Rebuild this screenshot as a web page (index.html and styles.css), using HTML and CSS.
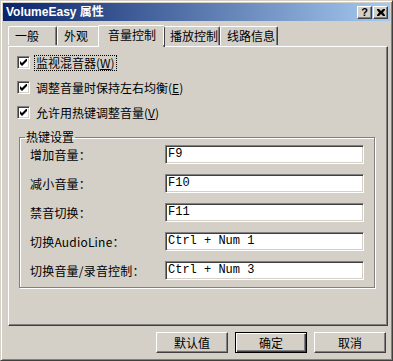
FILE: index.html
```html
<!DOCTYPE html>
<html lang="zh-CN">
<head>
    <meta charset="UTF-8">
    <title>VolumeEasy 属性</title>
    <link rel="stylesheet" href="styles.css">
</head>
<body>
    <div class="window">
        <div class="titlebar">
            <span class="title">VolumeEasy 属性</span>
            <div class="title-buttons">
                <span class="cap-btn">?</span>
                <span class="cap-btn">
                    <svg width="8" height="7" viewBox="0 0 8 7"><path d="M0 0h2l2 2 2-2h2v1l-2 2.5 2 2.5v1h-2l-2-2-2 2h-2v-1l2-2.5-2-2.5z" fill="#000"/></svg>
                </span>
            </div>
        </div>

        <!-- Tabs -->
        <div class="tabs">
            <div class="tab t1">一般</div>
            <div class="tab t2">外观</div>
            <div class="tab t3 active">音量控制</div>
            <div class="tab t4">播放控制</div>
            <div class="tab t5">线路信息</div>
        </div>

        <div class="panel">
            <label class="check">
                <span class="box"><svg width="7" height="7" viewBox="0 0 7 7"><path d="M0 2v3l2 2 5-5v-3l-5 5z" fill="#000"/></svg></span>
                <span class="check-text focus">监视混音器(<u>W</u>)</span>
            </label>
            <label class="check">
                <span class="box"><svg width="7" height="7" viewBox="0 0 7 7"><path d="M0 2v3l2 2 5-5v-3l-5 5z" fill="#000"/></svg></span>
                <span class="check-text">调整音量时保持左右均衡(<u>E</u>)</span>
            </label>
            <label class="check">
                <span class="box"><svg width="7" height="7" viewBox="0 0 7 7"><path d="M0 2v3l2 2 5-5v-3l-5 5z" fill="#000"/></svg></span>
                <span class="check-text">允许用热键调整音量(<u>V</u>)</span>
            </label>

            <fieldset class="group">
                <legend>热键设置</legend>
                <div class="row"><span class="lbl">增加音量：</span><div class="field">F9</div></div>
                <div class="row"><span class="lbl">减小音量：</span><div class="field">F10</div></div>
                <div class="row"><span class="lbl">禁音切换：</span><div class="field">F11</div></div>
                <div class="row"><span class="lbl">切换AudioLine：</span><div class="field">Ctrl + Num 1</div></div>
                <div class="row"><span class="lbl">切换音量/录音控制：</span><div class="field">Ctrl + Num 3</div></div>
            </fieldset>
        </div>

        <div class="actions">
            <div class="btn">默认值</div>
            <div class="btn default">确定</div>
            <div class="btn">取消</div>
        </div>
    </div>
</body>
</html>
```

FILE: styles.css
```css
:root {
    --face: #d4d0c8;
    --light: #ffffff;
    --shadow: #808080;
    --dark: #404040;
}

* {
    margin: 0;
    padding: 0;
    box-sizing: border-box;
}

body {
    background: var(--face);
    font-family: "Noto Sans CJK SC", "DejaVu Sans", sans-serif;
    font-size: 12px;
    color: #000;
}

.window {
    width: 393px;
    height: 361px;
    background: var(--face);
    border-top: 1px solid var(--face);
    border-left: 1px solid var(--face);
    border-right: 1px solid var(--dark);
    border-bottom: 1px solid var(--dark);
    box-shadow: inset 1px 1px var(--light), inset -1px -1px var(--shadow);
    padding: 2px;
    display: flex;
    flex-direction: column;
}

.titlebar {
    height: 18px;
    background: linear-gradient(to right, #0a246a, #a6caf0);
    display: flex;
    align-items: center;
    justify-content: space-between;
    padding: 0 2px 0 3px;
}

.title {
    color: #fff;
    font-family: "Liberation Sans", "Noto Sans CJK SC", sans-serif;
    font-weight: bold;
    font-size: 12px;
    line-height: 18px;
}

.title-buttons {
    display: flex;
    gap: 1px;
}

.cap-btn {
    width: 15px;
    height: 13px;
    background: var(--face);
    border-top: 1px solid var(--light);
    border-left: 1px solid var(--light);
    border-right: 1px solid var(--dark);
    border-bottom: 1px solid var(--dark);
    box-shadow: inset -1px -1px var(--shadow);
    display: flex;
    align-items: center;
    justify-content: center;
    font-family: "Liberation Sans", sans-serif;
    font-weight: bold;
    font-size: 11px;
    line-height: 11px;
}

/* tabs */
.tabs {
    display: flex;
    padding-left: 5px;
    margin-top: 4px;
    height: 21px;
    align-items: flex-end;
    position: relative;
    z-index: 1;
}

.tab {
    height: 19px;
    border-top: 1px solid var(--light);
    border-left: 1px solid var(--light);
    border-right: 1px solid var(--dark);
    box-shadow: inset -1px 0 var(--shadow);
    border-radius: 2px 2px 0 0;
    font-size: 12px;
    line-height: 18px;
    padding-left: 6px;
    margin-bottom: 1px;
}

.t1 { width: 49px; }
.t2 { width: 43px; }
.t3 { width: 63px; }
.t4 { width: 57px; }
.t5 { width: 58px; }

.tab.active {
    height: 22px;
    margin: 0 -2px -1px;
    width: 67px;
    padding-left: 9px;
    background: var(--face);
}

.panel {
    height: 280px;
    margin-left: 5px;
    margin-right: 2px;
    border-top: 1px solid var(--light);
    border-left: 1px solid var(--light);
    border-right: 1px solid var(--dark);
    border-bottom: 1px solid var(--dark);
    box-shadow: inset -1px -1px var(--shadow);
    padding: 9px 12px 0 8px;
}

.check {
    display: flex;
    align-items: center;
    height: 13px;
    margin-bottom: 12px;
}

.box {
    width: 13px;
    height: 13px;
    background: #fff;
    border-top: 1px solid var(--shadow);
    border-left: 1px solid var(--shadow);
    border-right: 1px solid var(--light);
    border-bottom: 1px solid var(--light);
    box-shadow: inset 1px 1px var(--dark), inset -1px -1px var(--face);
    display: flex;
    align-items: center;
    justify-content: center;
    margin-right: 5px;
}

.check-text {
    line-height: 14px;
    padding: 0 1px;
}

.check-text.focus {
    outline: 1px dotted #000;
}

.group {
    margin: 4px 0 0 2px;
    border: 1px solid var(--shadow);
    box-shadow: 1px 1px var(--light), inset 1px 1px var(--light);
    padding: 2px 10px 5px 10px;
    height: 157px;
}

.group legend {
    padding: 0 1px;
    margin-left: -5px;
    line-height: 12px;
}

.row {
    display: flex;
    align-items: center;
    height: 19px;
    margin-bottom: 10px;
}

.lbl {
    width: 135px;
    white-space: nowrap;
    letter-spacing: 0.2px;
}

.field {
    flex: 1;
    height: 19px;
    background: #fff;
    border-top: 1px solid var(--shadow);
    border-left: 1px solid var(--shadow);
    border-right: 1px solid var(--light);
    border-bottom: 1px solid var(--light);
    box-shadow: inset 1px 1px var(--dark), inset -1px -1px var(--face);
    font-family: "Liberation Mono", monospace;
    font-size: 12px;
    line-height: 17px;
    padding-left: 2px;
}

.actions {
    display: flex;
    justify-content: flex-end;
    gap: 7px;
    margin-top: 6px;
    padding-right: 4px;
}

.btn {
    width: 72px;
    height: 21px;
    border-top: 1px solid var(--light);
    border-left: 1px solid var(--light);
    border-right: 1px solid var(--dark);
    border-bottom: 1px solid var(--dark);
    box-shadow: inset -1px -1px var(--shadow);
    display: flex;
    align-items: center;
    justify-content: center;
    font-size: 12px;
}

.btn.default {
    border: 1px solid #000;
    box-shadow: inset 1px 1px var(--light), inset -1px -1px var(--dark), inset -2px -2px var(--shadow);
}
```
